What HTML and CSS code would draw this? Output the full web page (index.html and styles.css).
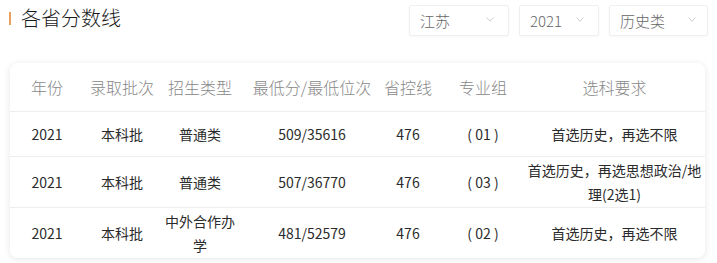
FILE: index.html
```html
<!DOCTYPE html>
<html lang="zh">
<head>
<meta charset="utf-8">
<link rel="stylesheet" href="styles.css">
</head>
<body>
<div class="topbar">
  <div class="title"><span class="title-bar"></span><span class="title-text">各省分数线</span></div>
  <div class="filters">
    <div class="select w100"><span>江苏</span><svg class="chev" viewBox="0 0 8 5" width="8" height="5"><path d="M0.5 0.5 L4 4.2 L7.5 0.5" fill="none" stroke="#c8c8c8" stroke-width="0.9"/></svg></div>
    <div class="select w80"><span>2021</span><svg class="chev" viewBox="0 0 8 5" width="8" height="5"><path d="M0.5 0.5 L4 4.2 L7.5 0.5" fill="none" stroke="#c8c8c8" stroke-width="0.9"/></svg></div>
    <div class="select w99"><span>历史类</span><svg class="chev" viewBox="0 0 8 5" width="8" height="5"><path d="M0.5 0.5 L4 4.2 L7.5 0.5" fill="none" stroke="#c8c8c8" stroke-width="0.9"/></svg></div>
  </div>
</div>
<div class="card">
  <table class="score-table">
    <colgroup>
      <col class="c1"><col class="c2"><col class="c3"><col class="c4"><col class="c5"><col class="c6"><col class="c7">
    </colgroup>
    <thead>
      <tr class="head-row">
        <th>年份</th><th>录取批次</th><th>招生类型</th><th>最低分/最低位次</th><th>省控线</th><th class="grp">专业组</th><th>选科要求</th>
      </tr>
    </thead>
    <tbody>
      <tr class="row-a">
        <td>2021</td><td>本科批</td><td>普通类</td><td>509/35616</td><td>476</td><td class="grp grp-code">( 01 )</td><td>首选历史，再选不限</td>
      </tr>
      <tr class="row-b">
        <td>2021</td><td>本科批</td><td>普通类</td><td>507/36770</td><td>476</td><td class="grp grp-code">( 03 )</td><td>首选历史，再选思想政治/地理(2选1)</td>
      </tr>
      <tr class="row-b last">
        <td>2021</td><td>本科批</td><td>中外合作办学</td><td>481/52579</td><td>476</td><td class="grp grp-code">( 02 )</td><td>首选历史，再选不限</td>
      </tr>
    </tbody>
  </table>
</div>
</body>
</html>
```
FILE: styles.css
```css
* { box-sizing: border-box; }
html, body { margin: 0; padding: 0; background: #fff; }
body {
  width: 717px;
  height: 263px;
  overflow: hidden;
  font-family: "Noto Sans CJK SC", "Noto Sans", sans-serif;
  color: #333;
  padding-top: 5px;
}
.topbar {
  display: flex;
  justify-content: space-between;
  align-items: flex-start;
  height: 31px;
  padding: 0 9px;
}
.title {
  display: flex;
  align-items: flex-start;
}
.title-bar {
  width: 2px;
  height: 13px;
  margin-top: 7px;
  background: #e9a15e;
}
.title-text {
  margin-left: 10px;
  font-size: 20px;
  line-height: 26px;
  font-weight: 300;
  color: #1a1a1a;
}
.filters {
  display: flex;
  gap: 10px;
}
.select {
  height: 31px;
  border: 1px solid #efefef;
  border-radius: 2px;
  display: flex;
  align-items: center;
  justify-content: space-between;
  padding: 0 14px 0 10px;
  font-size: 15px;
  font-weight: 300;
  color: #666;
  box-shadow: 0 1px 2px rgba(0,0,0,0.03);
}
.w100 { width: 100px; }
.w80 { width: 80px; }
.w99 { width: 99px; padding-right: 11px; }
.chev { display: block; margin-top: -2px; }
.card {
  margin: 27px 0 0 10px;
  width: 695px;
  border-radius: 8px;
  background: #fff;
  box-shadow: 0 1px 7px rgba(0,0,0,0.10);
  overflow: hidden;
}
.score-table {
  width: 695px;
  table-layout: fixed;
  border-collapse: collapse;
}
.c1 { width: 74px; }
.c2 { width: 76px; }
.c3 { width: 80px; }
.c4 { width: 144px; }
.c5 { width: 48px; }
.c6 { width: 92px; }
.c7 { width: 181px; }
th, td {
  padding: 0;
  text-align: center;
  vertical-align: middle;
  white-space: normal;
}
th {
  font-weight: 300;
  font-size: 16px;
  color: #888;
  height: 48px;
  border-bottom: 1px solid #eeeeee;
}
td {
  font-size: 14px;
  line-height: 24px;
  color: #2b2b2b;
  border-bottom: 1px solid #eeeeee;
}
.row-a td { height: 45px; }
.row-b td { height: 51px; }
.last td { border-bottom: none; height: 51px; }
.grp { padding-left: 10px; }
.grp-code { white-space: pre; }
```
